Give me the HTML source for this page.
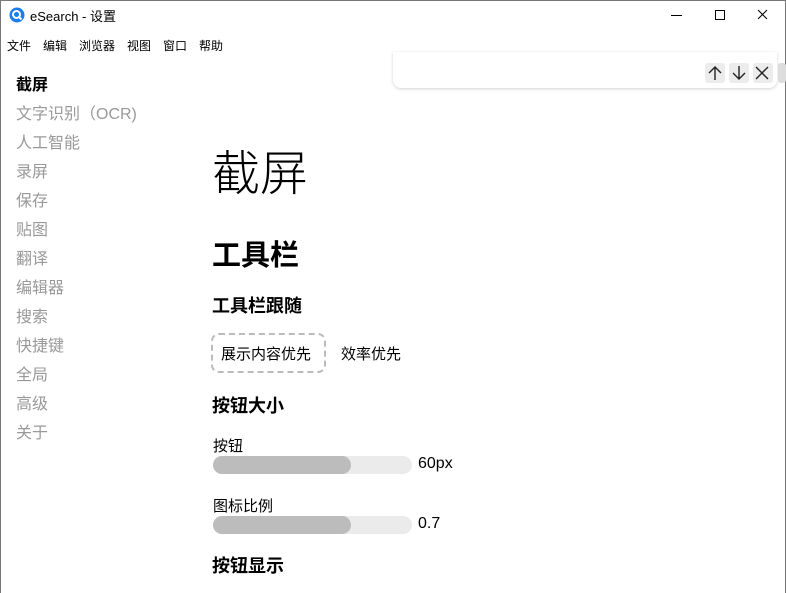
<!DOCTYPE html>
<html><head><meta charset="utf-8"><style>
*{margin:0;padding:0;box-sizing:border-box}
body{width:786px;height:593px;overflow:hidden;background:#fff;font-family:"Liberation Sans","Noto Sans CJK SC",sans-serif;color:#000;position:relative}
.frame{position:absolute;left:0;top:0;width:786px;height:593px;border:1px solid #777;border-bottom:none;pointer-events:none}
.a{position:absolute;white-space:nowrap}
.side{font-size:16px;color:#999;left:16px}
.sl{position:absolute;left:213px;width:199px;height:18px;border-radius:9px;background:#ebebeb}
.sl div{width:138px;height:18px;border-radius:9px;background:#bcbcbc}
.ib{position:absolute;top:63px;width:20px;height:20px;background:#ececec;border-radius:3px}
.m{position:absolute;top:37px;font-size:12px}
</style></head><body>
<div class="frame"></div>
<svg class="a" style="left:9px;top:7px" width="16" height="16" viewBox="0 0 16 16"><circle cx="8" cy="8" r="7.5" fill="#1a7cf0"/><circle cx="7.5" cy="7.5" r="3.5" fill="none" stroke="#fff" stroke-width="2"/><path d="M9.5 9.5l3 3" stroke="#fff" stroke-width="2"/></svg>
<div class="a" style="left:30px;top:6px;font-size:13px">eSearch - 设置</div>
<svg class="a" style="left:664px;top:8px" width="110" height="14"><path d="M7 7.5h11" stroke="#000"/><rect x="51.5" y="2.5" width="9" height="9" fill="none" stroke="#000"/><path d="M94 2l9 9M103 2l-9 9" stroke="#000"/></svg>
<div class="m" style="left:7px">文件</div><div class="m" style="left:43px">编辑</div><div class="m" style="left:79px">浏览器</div><div class="m" style="left:127px">视图</div><div class="m" style="left:163px">窗口</div><div class="m" style="left:199px">帮助</div>
<div class="a" style="left:16px;top:71px;font-size:16px;font-weight:bold">截屏</div>
<div class="a side" style="top:100px">文字识别（OCR)</div>
<div class="a side" style="top:129px">人工智能</div>
<div class="a side" style="top:158px">录屏</div>
<div class="a side" style="top:187px">保存</div>
<div class="a side" style="top:216px">贴图</div>
<div class="a side" style="top:245px">翻译</div>
<div class="a side" style="top:274px">编辑器</div>
<div class="a side" style="top:303px">搜索</div>
<div class="a side" style="top:332px">快捷键</div>
<div class="a side" style="top:361px">全局</div>
<div class="a side" style="top:390px">高级</div>
<div class="a side" style="top:419px">关于</div>
<div class="a" style="left:393px;top:52px;width:384px;height:36px;background:#fff;border-radius:0 0 8px 8px;box-shadow:0 1px 3px rgba(0,0,0,.18)"></div>
<div class="ib" style="left:705px"></div><div class="ib" style="left:729px"></div><div class="ib" style="left:753px"></div>
<svg class="a" style="left:705px;top:63px" width="70" height="20"><path d="M10 17V4M4 10l6-6 6 6M34 3v13M28 10l6 6 6-6M51 4l12 12M63 4L51 16" stroke="#222" stroke-width="1.4" fill="none"/></svg>
<div class="a" style="left:778px;top:63px;width:8px;height:20px;background:#ddd;border-radius:3px"></div>
<div class="a" style="left:212px;top:134px;font-size:48px;font-weight:300">截屏</div>
<div class="a" style="left:212px;top:232px;font-size:29px;font-weight:bold">工具栏</div>
<div class="a" style="left:212px;top:292px;font-size:18px;font-weight:bold">工具栏跟随</div>
<div class="a" style="left:211px;top:333px;width:115px;height:40px;border:2px dashed #bbb;border-radius:8px"></div>
<div class="a" style="left:221px;top:343px;font-size:15px">展示内容优先</div>
<div class="a" style="left:341px;top:343px;font-size:15px">效率优先</div>
<div class="a" style="left:212px;top:392px;font-size:18px;font-weight:bold">按钮大小</div>
<div class="a" style="left:213px;top:435px;font-size:15px">按钮</div>
<div class="sl" style="top:456px"><div></div></div>
<div class="a" style="left:418px;top:455px;font-size:16px">60px</div>
<div class="a" style="left:213px;top:495px;font-size:15px">图标比例</div>
<div class="sl" style="top:516px"><div></div></div>
<div class="a" style="left:418px;top:515px;font-size:16px">0.7</div>
<div class="a" style="left:212px;top:552px;font-size:18px;font-weight:bold">按钮显示</div>
</body></html>
